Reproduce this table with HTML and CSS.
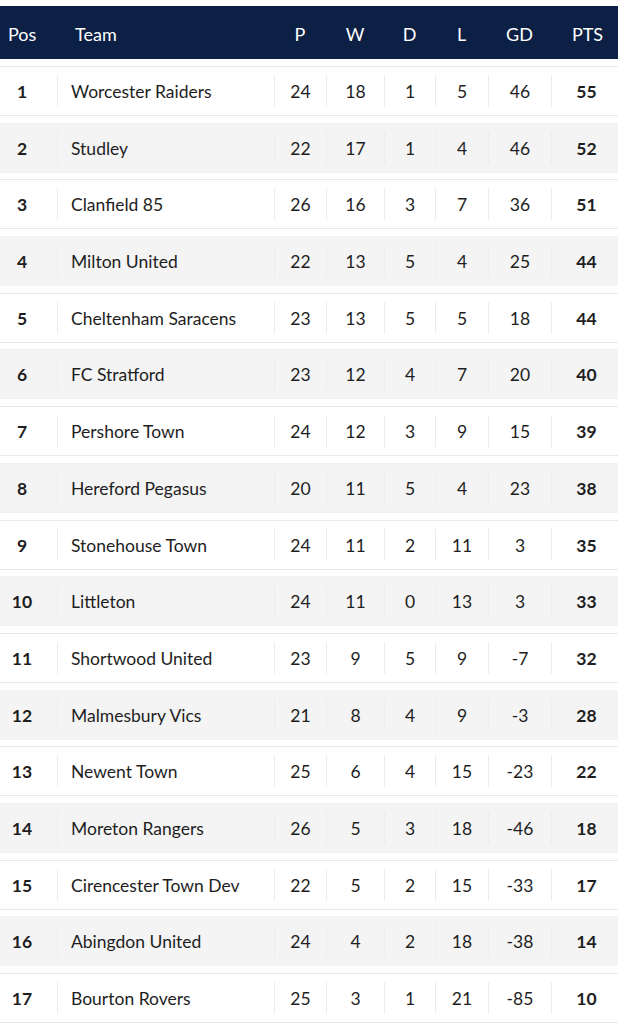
FILE: index.html
```html
<!DOCTYPE html>
<html lang="en">
<head>
<meta charset="utf-8">
<title>League Table</title>
<link rel="stylesheet" href="styles.css">
</head>
<body>
<div class="table">
  <div class="head">
    <div class="h pos">Pos</div>
    <div class="h team">Team</div>
    <div class="h num">P</div>
    <div class="h num">W</div>
    <div class="h num">D</div>
    <div class="h num">L</div>
    <div class="h num">GD</div>
    <div class="h num pts">PTS</div>
  </div>
  <div class="rows">
    <div class="row"><div class="c pos">1</div><div class="c team">Worcester Raiders</div><div class="c num">24</div><div class="c num">18</div><div class="c num">1</div><div class="c num">5</div><div class="c num">46</div><div class="c num pts">55</div></div>
    <div class="row"><div class="c pos">2</div><div class="c team">Studley</div><div class="c num">22</div><div class="c num">17</div><div class="c num">1</div><div class="c num">4</div><div class="c num">46</div><div class="c num pts">52</div></div>
    <div class="row"><div class="c pos">3</div><div class="c team">Clanfield 85</div><div class="c num">26</div><div class="c num">16</div><div class="c num">3</div><div class="c num">7</div><div class="c num">36</div><div class="c num pts">51</div></div>
    <div class="row"><div class="c pos">4</div><div class="c team">Milton United</div><div class="c num">22</div><div class="c num">13</div><div class="c num">5</div><div class="c num">4</div><div class="c num">25</div><div class="c num pts">44</div></div>
    <div class="row"><div class="c pos">5</div><div class="c team">Cheltenham Saracens</div><div class="c num">23</div><div class="c num">13</div><div class="c num">5</div><div class="c num">5</div><div class="c num">18</div><div class="c num pts">44</div></div>
    <div class="row"><div class="c pos">6</div><div class="c team">FC Stratford</div><div class="c num">23</div><div class="c num">12</div><div class="c num">4</div><div class="c num">7</div><div class="c num">20</div><div class="c num pts">40</div></div>
    <div class="row"><div class="c pos">7</div><div class="c team">Pershore Town</div><div class="c num">24</div><div class="c num">12</div><div class="c num">3</div><div class="c num">9</div><div class="c num">15</div><div class="c num pts">39</div></div>
    <div class="row"><div class="c pos">8</div><div class="c team">Hereford Pegasus</div><div class="c num">20</div><div class="c num">11</div><div class="c num">5</div><div class="c num">4</div><div class="c num">23</div><div class="c num pts">38</div></div>
    <div class="row"><div class="c pos">9</div><div class="c team">Stonehouse Town</div><div class="c num">24</div><div class="c num">11</div><div class="c num">2</div><div class="c num">11</div><div class="c num">3</div><div class="c num pts">35</div></div>
    <div class="row"><div class="c pos">10</div><div class="c team">Littleton</div><div class="c num">24</div><div class="c num">11</div><div class="c num">0</div><div class="c num">13</div><div class="c num">3</div><div class="c num pts">33</div></div>
    <div class="row"><div class="c pos">11</div><div class="c team">Shortwood United</div><div class="c num">23</div><div class="c num">9</div><div class="c num">5</div><div class="c num">9</div><div class="c num">-7</div><div class="c num pts">32</div></div>
    <div class="row"><div class="c pos">12</div><div class="c team">Malmesbury Vics</div><div class="c num">21</div><div class="c num">8</div><div class="c num">4</div><div class="c num">9</div><div class="c num">-3</div><div class="c num pts">28</div></div>
    <div class="row"><div class="c pos">13</div><div class="c team">Newent Town</div><div class="c num">25</div><div class="c num">6</div><div class="c num">4</div><div class="c num">15</div><div class="c num">-23</div><div class="c num pts">22</div></div>
    <div class="row"><div class="c pos">14</div><div class="c team">Moreton Rangers</div><div class="c num">26</div><div class="c num">5</div><div class="c num">3</div><div class="c num">18</div><div class="c num">-46</div><div class="c num pts">18</div></div>
    <div class="row"><div class="c pos">15</div><div class="c team">Cirencester Town Dev</div><div class="c num">22</div><div class="c num">5</div><div class="c num">2</div><div class="c num">15</div><div class="c num">-33</div><div class="c num pts">17</div></div>
    <div class="row"><div class="c pos">16</div><div class="c team">Abingdon United</div><div class="c num">24</div><div class="c num">4</div><div class="c num">2</div><div class="c num">18</div><div class="c num">-38</div><div class="c num pts">14</div></div>
    <div class="row"><div class="c pos">17</div><div class="c team">Bourton Rovers</div><div class="c num">25</div><div class="c num">3</div><div class="c num">1</div><div class="c num">21</div><div class="c num">-85</div><div class="c num pts">10</div></div>
  </div>
</div>
</body>
</html>
```
FILE: styles.css
```css
html, body {
  margin: 0;
  padding: 0;
  background: #ffffff;
}
body {
  font-family: Lato, "Open Sans", "Liberation Sans", sans-serif;
  font-size: 17.5px;
  color: #1e1e1e;
}
.table {
  padding-top: 6px;
}
.head, .row {
  display: grid;
  grid-template-columns: 57px 217px 52px 58px 51px 53px 63px 67px;
}
.head {
  box-sizing: border-box;
  height: 53px;
  padding-top: 3px;
  background: #0c1f45;
  color: #ffffff;
  font-size: 18px;
  align-items: center;
}
.h.pos {
  padding-left: 8px;
}
.h.team {
  padding-left: 18px;
}
.h.num {
  text-align: center;
}
.h.pts {
  padding-left: 6px;
}
.rows {
  display: flex;
  flex-direction: column;
  gap: 6.69px;
  padding-top: 7px;
}
.row {
  box-sizing: border-box;
  height: 50px;
  border-top: 1px solid #e9e9e9;
  border-bottom: 1px solid #e9e9e9;
  background: #ffffff;
}
.row:nth-child(even) {
  background: #f4f4f4;
  border-color: #f1f1f1;
}
.c {
  display: flex;
  align-items: center;
  margin: 8px 0;
  padding-top: 1px;
}
.c.pos {
  justify-content: center;
  padding-right: 13px;
  font-weight: 700;
}
.c.team {
  padding-left: 13px;
  border-left: 1px solid #ececec;
}
.c.num {
  justify-content: center;
  border-left: 1px solid #ececec;
}
.c.pts {
  font-weight: 700;
  padding-left: 3px;
}
```
